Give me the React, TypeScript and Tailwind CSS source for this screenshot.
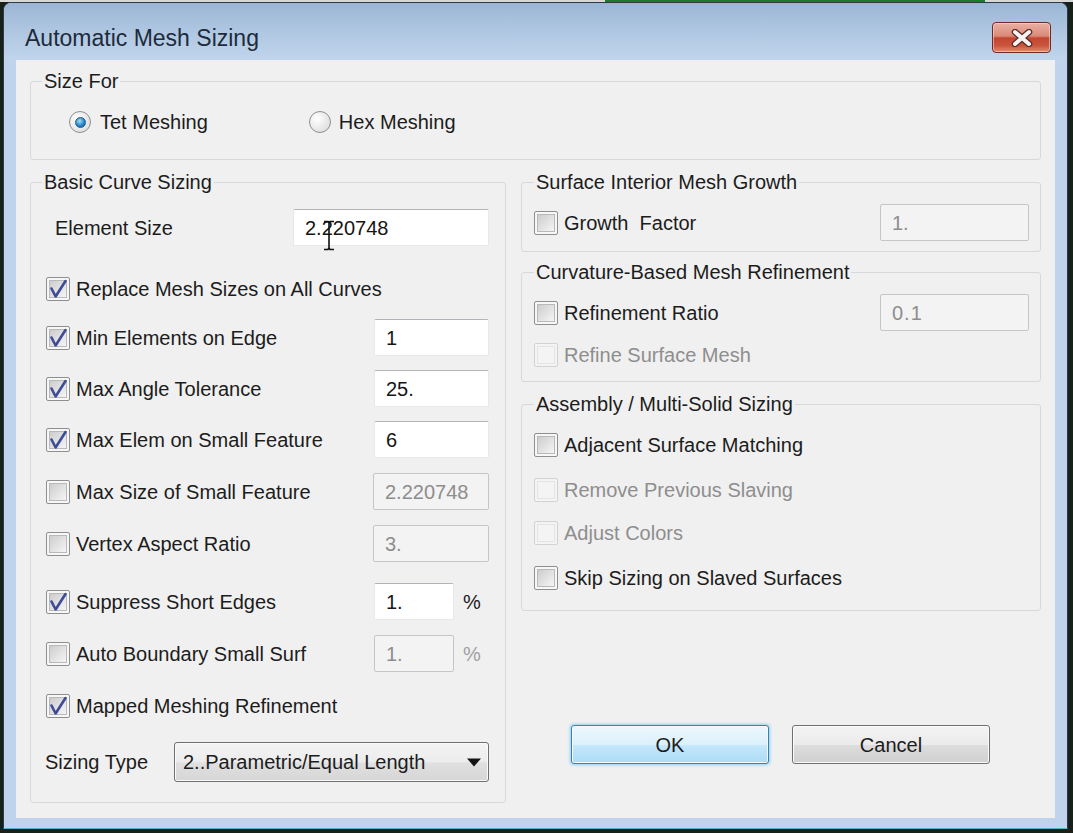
import React from 'react';

const FONT = "font-['Liberation_Sans',Arial,sans-serif]";

function CheckBox({ checked = false, disabled = false }: { checked?: boolean; disabled?: boolean }) {
  return (
    <span
      className={`relative flex h-[24px] w-[24px] shrink-0 items-center justify-center rounded-[2px] border ${
        disabled ? 'border-[#d2d2d2] bg-[#f4f4f4]' : 'border-[#8e8f8f] bg-[#f7f7f7]'
      }`}
    >
      <span
        className={`h-[18px] w-[18px] border ${
          disabled
            ? 'border-[#e4e4e4] bg-[#f4f4f4]'
            : 'border-[#b9b9b9] bg-[linear-gradient(135deg,#cdcdcd,#f5f5f5)]'
        }`}
      />
      {checked && (
        <svg className="absolute left-[-1px] top-[-1px]" width="24" height="24" viewBox="0 0 24 24">
          <path
            d="M5.5 11.5 L9.6 19.5 L19.5 4"
            fill="none"
            stroke="#3e4c96"
            strokeWidth="2.6"
            strokeLinejoin="round"
            strokeLinecap="round"
          />
        </svg>
      )}
    </span>
  );
}

function Radio({ checked = false }: { checked?: boolean }) {
  return (
    <span className="flex h-[22px] w-[22px] shrink-0 items-center justify-center rounded-full border border-[#8e8f8f] bg-[radial-gradient(circle_at_35%_35%,#ffffff,#d6d6d6)]">
      {checked && (
        <span className="h-[11px] w-[11px] rounded-full border border-[#1a5a92] bg-[radial-gradient(circle_at_40%_35%,#a7def8,#2a86c8_55%,#0f568f)]" />
      )}
    </span>
  );
}

function TextBox({
  value,
  disabled = false,
  className,
}: {
  value: string;
  disabled?: boolean;
  className: string;
}) {
  return (
    <div
      className={`flex h-[37px] shrink-0 items-center rounded-[2px] border pl-[11px] ${className} ${
        disabled
          ? 'border-[#c6c6c6] bg-[#f3f3f3] text-[#8d8d8d]'
          : 'border-[#e6e8ea] border-t-[#b1b5ba] bg-white text-[#151515]'
      }`}
    >
      {value}
    </div>
  );
}

function Label({ children, disabled = false }: { children: React.ReactNode; disabled?: boolean }) {
  return (
    <span className={`ml-[6px] whitespace-pre ${disabled ? 'text-[#8e8e8e]' : 'text-[#1c1c1c]'}`}>{children}</span>
  );
}

export default function App() {
  return (
    <div
      className={`${FONT} flex h-[833px] w-[1073px] flex-col overflow-hidden bg-[#16211a] text-[20px] leading-[24px] text-[#1c1c1c]`}
    >
      <div className="flex h-[2px] shrink-0 bg-[#d8d8d8]">
        <div className="ml-[605px] w-[380px] bg-[#1d7a2c]" />
      </div>

      {/* Window */}
      <div className="ml-[3px] flex h-[827px] w-[1065px] shrink-0 flex-col rounded-t-[8px] border border-[#2f3a44] border-b-[#4fb5cb] bg-[#bfd4ec]">
        {/* Title bar */}
        <div className="flex h-[57px] shrink-0 items-start rounded-t-[7px] bg-[linear-gradient(to_bottom,#9bb6d5,#b3cae4_60%,#c0d5ec)]">
          <div className="ml-[21px] mt-[21px] text-[23px] leading-[28px] text-[#1d2b3b]">Automatic Mesh Sizing</div>
          <div className="ml-auto mr-[16px] mt-[19px] flex h-[31px] w-[59px] items-center justify-center rounded-[4px] border border-[#6e2b27] bg-[linear-gradient(to_bottom,#eab0a4_0%,#da8a78_45%,#c4452f_52%,#c9553d_78%,#df8e72_100%)] shadow-[inset_0_0_0_1px_rgba(255,220,210,0.55)]">
            <svg width="24" height="18" viewBox="0 0 24 18">
              <path d="M5 3 L19 15 M19 3 L5 15" stroke="#5a2a26" strokeWidth="6.5" strokeLinecap="round" />
              <path d="M5 3 L19 15 M19 3 L5 15" stroke="#f7f3f2" strokeWidth="4" strokeLinecap="round" />
            </svg>
          </div>
        </div>

        {/* Client area */}
        <div className="ml-[12px] flex h-[758px] w-[1039px] flex-col bg-[#f0f0f0] px-[14px] pt-[9px]">
          {/* Size For */}
          <fieldset className="rounded-[3px] border border-[#d6d9dc] pb-[25px]">
            <legend className="ml-[11px] px-[2px]">Size For</legend>
            <div className="mt-[17px] flex h-[24px] items-center pl-[38px]">
              <Radio checked />
              <span className="ml-[9px]">Tet Meshing</span>
              <span className="ml-[101px]">
                <Radio />
              </span>
              <span className="ml-[8px]">Hex Meshing</span>
            </div>
          </fieldset>

          <div className="mt-[10px] flex gap-[15px]">
            {/* Left column: Basic Curve Sizing */}
            <fieldset className="w-[476px] rounded-[3px] border border-[#d6d9dc] pb-[20px] pl-[15px] pr-[16px]">
              <legend className="ml-[-4px] px-[2px]">Basic Curve Sizing</legend>

              <div className="mt-[15px] flex h-[37px] items-center">
                <span className="ml-[9px]">Element Size</span>
                <div className="relative ml-auto">
                  <TextBox value="2.220748" className="w-[196px]" />
                  <svg className="absolute left-[30px] top-[11px]" width="12" height="31" viewBox="0 0 12 31">
                    <path d="M1 1.5 H5 L6 3 L7 1.5 H11 M6 3 V28 M1 29.5 H5 L6 28 L7 29.5 H11" fill="none" stroke="#111" strokeWidth="1.6" />
                  </svg>
                </div>
              </div>

              <div className="mt-[24px] flex h-[37px] items-center">
                <CheckBox checked />
                <Label>Replace Mesh Sizes on All Curves</Label>
              </div>

              <div className="mt-[12px] flex h-[37px] items-center">
                <CheckBox checked />
                <Label>Min Elements on Edge</Label>
                <TextBox value="1" className="ml-auto w-[115px]" />
              </div>

              <div className="mt-[14px] flex h-[37px] items-center">
                <CheckBox checked />
                <Label>Max Angle Tolerance</Label>
                <TextBox value="25." className="ml-auto w-[115px]" />
              </div>

              <div className="mt-[14px] flex h-[37px] items-center">
                <CheckBox checked />
                <Label>Max Elem on Small Feature</Label>
                <TextBox value="6" className="ml-auto w-[115px]" />
              </div>

              <div className="mt-[15px] flex h-[37px] items-center">
                <CheckBox />
                <Label>Max Size of Small Feature</Label>
                <TextBox value="2.220748" disabled className="ml-auto w-[116px]" />
              </div>

              <div className="mt-[15px] flex h-[37px] items-center">
                <CheckBox />
                <Label>Vertex Aspect Ratio</Label>
                <TextBox value="3." disabled className="ml-auto w-[116px]" />
              </div>

              <div className="mt-[21px] flex h-[37px] items-center">
                <CheckBox checked />
                <Label>Suppress Short Edges</Label>
                <div className="ml-auto flex w-[115px] items-center">
                  <TextBox value="1." className="w-[80px]" />
                  <span className="ml-[9px] text-[#1c1c1c]">%</span>
                </div>
              </div>

              <div className="mt-[15px] flex h-[37px] items-center">
                <CheckBox />
                <Label>Auto Boundary Small Surf</Label>
                <div className="ml-auto flex w-[115px] items-center">
                  <TextBox value="1." disabled className="w-[80px]" />
                  <span className="ml-[9px] text-[#a0a0a0]">%</span>
                </div>
              </div>

              <div className="mt-[15px] flex h-[37px] items-center">
                <CheckBox checked />
                <Label>Mapped Meshing Refinement</Label>
              </div>

              <div className="mt-[18px] flex h-[40px] items-center">
                <span className="ml-[-1px]">Sizing Type</span>
                <div className="ml-auto flex h-[40px] w-[315px] items-center rounded-[3px] border border-[#707070] bg-[linear-gradient(to_bottom,#f4f4f4,#ececec_50%,#e0e0e0_52%,#d6d6d6)] pl-[8px] pr-[6px] shadow-[inset_0_0_0_1px_#fafafa]">
                  <span>2..Parametric/Equal Length</span>
                  <svg className="ml-auto" width="16" height="9" viewBox="0 0 16 9">
                    <path d="M1 0.5 H15 L8 8.5 Z" fill="#151515" />
                  </svg>
                </div>
              </div>
            </fieldset>

            {/* Right column */}
            <div className="flex w-[520px] flex-col">
              <fieldset className="rounded-[3px] border border-[#d6d9dc] pb-[10px] pl-[12px] pr-[11px]">
                <legend className="ml-[0px] px-[2px]">Surface Interior Mesh Growth</legend>
                <div className="mt-[10px] flex h-[37px] items-center">
                  <CheckBox />
                  <Label>{'Growth  Factor'}</Label>
                  <TextBox value="1." disabled className="ml-auto w-[149px]" />
                </div>
              </fieldset>

              <fieldset className="mt-[8px] rounded-[3px] border border-[#d6d9dc] pb-[8px] pl-[12px] pr-[11px]">
                <legend className="ml-[0px] px-[2px]">Curvature-Based Mesh Refinement</legend>
                <div className="mt-[10px] flex h-[37px] items-center">
                  <CheckBox />
                  <Label>Refinement Ratio</Label>
                  <TextBox value="0.1" disabled className="ml-auto w-[149px] tracking-[1px]" />
                </div>
                <div className="mt-[6px] flex h-[36px] items-center">
                  <CheckBox disabled />
                  <Label disabled>Refine Surface Mesh</Label>
                </div>
              </fieldset>

              <fieldset className="mt-[10px] rounded-[3px] border border-[#d6d9dc] pb-[14px] pl-[12px] pr-[11px]">
                <legend className="ml-[0px] px-[2px]">Assembly / Multi-Solid Sizing</legend>
                <div className="mt-[11px] flex h-[36px] items-center">
                  <CheckBox />
                  <Label>Adjacent Surface Matching</Label>
                </div>
                <div className="mt-[9px] flex h-[36px] items-center">
                  <CheckBox disabled />
                  <Label disabled>Remove Previous Slaving</Label>
                </div>
                <div className="mt-[7px] flex h-[36px] items-center">
                  <CheckBox disabled />
                  <Label disabled>Adjust Colors</Label>
                </div>
                <div className="mt-[9px] flex h-[36px] items-center">
                  <CheckBox />
                  <Label>Skip Sizing on Slaved Surfaces</Label>
                </div>
              </fieldset>

              <div className="ml-[50px] mt-[114px] flex gap-[23px]">
                <div className="flex h-[39px] w-[198px] items-center justify-center rounded-[3px] border border-[#3c7fb1] bg-[linear-gradient(to_bottom,#ecf7fd,#dcf1fc_50%,#c4e7fb_52%,#acdcf6)] text-[#1c1c1c] shadow-[0_0_3px_1px_#8fd0ef,inset_0_0_0_1px_#f4fbff]">
                  OK
                </div>
                <div className="flex h-[39px] w-[198px] items-center justify-center rounded-[3px] border border-[#707070] bg-[linear-gradient(to_bottom,#f3f3f3,#ebebeb_50%,#dddddd_52%,#d0d0d0)] text-[#1c1c1c] shadow-[inset_0_0_0_1px_#fbfbfb]">
                  Cancel
                </div>
              </div>
            </div>
          </div>
        </div>
      </div>
    </div>
  );
}
